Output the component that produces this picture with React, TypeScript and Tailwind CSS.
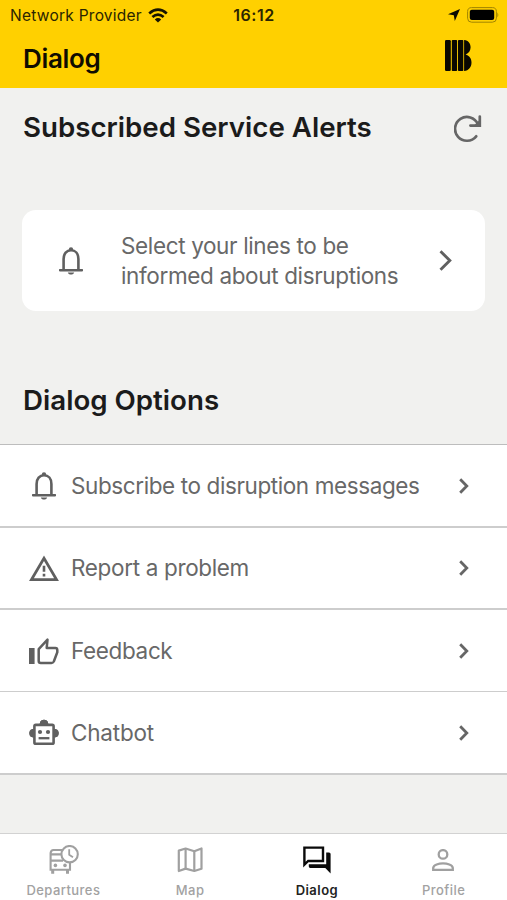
import type { ReactNode } from "react";

function BellIcon({ className = "" }: { className?: string }) {
  return (
    <svg className={className} width="24" height="28" viewBox="0 0 24 28" fill="none">
      <path d="M4.6 23V12C4.6 6.8 7.6 3.3 12 3.3S19.4 6.8 19.4 12V23" stroke="#606060" strokeWidth="2.6" />
      <path d="M1 23.2H23" stroke="#606060" strokeWidth="2.5" strokeLinecap="round" />
      <path d="M9.8 3.2V2.4a2.2 2.2 0 0 1 4.4 0v.8zM8.8 25.4h6.4c-.5 1.4-1.6 2.2-3.2 2.2s-2.7-.8-3.2-2.2z" fill="#606060" />
    </svg>
  );
}

function WarningIcon() {
  return (
    <svg width="30" height="27" viewBox="0 0 30 27" fill="none">
      <path d="M15 3.2L27.6 24.7H2.4z" stroke="#606060" strokeWidth="2.7" />
      <path d="M15 10.8v6M15 18.8v2.6" stroke="#606060" strokeWidth="2.6" />
    </svg>
  );
}

function ThumbIcon() {
  return (
    <svg width="30" height="28" viewBox="0 0 30 28" fill="none">
      <path d="M0 11h5.6v16H0z" fill="#606060" />
      <path
        d="M9.7 12.2L18.5 2.7L17.7 10.9H26.4Q28.3 10.9 28.3 13V15.2L24.8 24.5Q24 26 22.4 26H11.8Q9.7 26 9.7 24z"
        stroke="#606060"
        strokeWidth="2.5"
        strokeLinejoin="round"
      />
    </svg>
  );
}

function RobotIcon() {
  return (
    <svg width="30" height="27" viewBox="0 0 30 27" fill="none">
      <rect x="5.4" y="5.9" width="19.2" height="18.9" rx="1.4" stroke="#606060" strokeWidth="2.6" />
      <path d="M11 5a4 4 0 0 1 8 0zM4.5 10.2a4 4 0 0 0 0 8zM25.5 10.2a4 4 0 0 1 0 8z" fill="#606060" stroke="#606060" />
      <circle cx="11" cy="13" r="2.1" fill="#606060" />
      <circle cx="19" cy="13" r="2.1" fill="#606060" />
      <path d="M9.6 19.2h10.8" stroke="#606060" strokeWidth="2.3" />
    </svg>
  );
}

function RefreshIcon() {
  return (
    <svg width="28" height="28" viewBox="0 0 28 28" fill="none" stroke="#666" strokeWidth="2.7" strokeLinecap="round">
      <path d="M22.2 21.3A11.9 11.9 0 1 1 23.8 9" />
      <path d="M25.8 1.6V10.6H16.4" />
      <path d="M20 10.4L25.8 4.8V10.4z" fill="#666" stroke="none" />
    </svg>
  );
}

function Chevron({ large = false }: { large?: boolean }) {
  return large ? (
    <svg width="13" height="21" viewBox="0 0 13 21" fill="none">
      <path d="M1.5 1.3L10.8 10.5L1.5 19.7" stroke="#606060" strokeWidth="2.9" />
    </svg>
  ) : (
    <svg width="10" height="16" viewBox="0 0 10 16" fill="none">
      <path d="M1.2 1.2L7.8 8L1.2 14.8" stroke="#666" strokeWidth="2.8" />
    </svg>
  );
}

function BusIcon() {
  return (
    <svg className="ml-px" width="30" height="30" viewBox="0 0 30 30" fill="none" stroke="#a0a0a0" strokeWidth="2.1">
      <path d="M13.5 5H4.5Q2 5.2 1.6 8V24.8H21V17" />
      <path d="M1.6 9.4H12M1.6 15.6H14" />
      <path d="M3.7 25V28.8M18.5 25V28.8" strokeWidth="3" />
      <circle cx="6.4" cy="20.4" r="1.8" fill="#a0a0a0" stroke="none" />
      <circle cx="16" cy="20.4" r="1.8" fill="#a0a0a0" stroke="none" />
      <circle cx="20.6" cy="9.2" r="8.2" />
      <path d="M20.2 4.3V9.8L24 12.3" strokeWidth="1.8" />
    </svg>
  );
}

function MapIcon() {
  return (
    <svg width="26" height="26" viewBox="0 0 26 26" fill="none" stroke="#a0a0a0" strokeWidth="2.2" strokeLinejoin="round">
      <path d="M1.8 3.6L8.6 1.5L17.3 4.3L24.5 1.5V21.8L17.3 24L8.6 21.6L1.8 24z" />
      <path d="M8.6 1.5V21.6M17.3 4.3V24" />
    </svg>
  );
}

function ChatIcon() {
  return (
    <svg width="28" height="28" viewBox="0 0 28 28" fill="none">
      <path d="M1.4 1.6H20V15H5.2L1.4 18.6z" stroke="#0a0a0a" strokeWidth="2.4" />
      <path d="M23.2 6.4H26Q27.6 6.4 27.6 8V27.4L22.3 22H7.2Q5.8 22 5.8 20.6V18.2H23.2z" fill="#0a0a0a" />
    </svg>
  );
}

function ProfileIcon() {
  return (
    <svg className="mr-[2px]" width="22" height="22" viewBox="0 0 22 22" fill="none" stroke="#a0a0a0" strokeWidth="2.3">
      <circle cx="11" cy="5.4" r="4.3" />
      <path d="M1.2 20.8V18.8C1.6 15.9 6.8 14.4 11 14.4S20.4 15.9 20.8 18.8V20.8z" />
    </svg>
  );
}

function StatusBar() {
  return (
    <div className="grid h-[30px] grid-cols-3 items-center pl-[10px] pr-[8px] text-[#2b2500]">
      <div className="flex items-center gap-[6px] whitespace-nowrap">
        <span className="pt-px text-[15.5px] tracking-[0.25px]">Network Provider</span>
        <svg width="20" height="15" viewBox="0 0 20 15" fill="none" stroke="#171400" strokeWidth="2.7">
          <path d="M1.2 5.5Q10-2.1 18.8 5.5" />
          <path d="M4.4 9Q10 4.1 15.6 9" />
          <path d="M10 14.5L6.8 11.4Q10 8.7 13.2 11.4z" fill="#171400" stroke="none" />
        </svg>
      </div>
      <div className="pr-px text-center text-base font-semibold tracking-[0.55px]">16:12</div>
      <div className="flex items-center justify-end gap-[7px]">
        <svg width="12" height="12" viewBox="0 0 12 12">
          <path d="M12 0L6.8 12L5.8 6.2L0 5.2z" fill="#0c0a00" />
        </svg>
        <svg className="-mt-px" width="32" height="16" viewBox="0 0 32 16">
          <rect x=".6" y=".6" width="28.8" height="14.6" rx="4" fill="none" stroke="#a18400" strokeWidth="1" />
          <rect x="2.8" y="2.8" width="24.4" height="10.2" rx="2" fill="#000" />
          <path d="M30.4 5.5q1.8 2.4 0 4.8z" fill="#a18400" />
        </svg>
      </div>
    </div>
  );
}

function Logo() {
  return (
    <svg width="27" height="31" viewBox="0 0 27 31" fill="#0a0800">
      <rect x="0" y="0" width="5.8" height="31" rx="1.2" />
      <rect x="6.8" y="0" width="5.3" height="31" rx=".8" />
      <rect x="13" y="0" width="5.3" height="31" rx=".8" />
      <path d="M19.1 0C23.6.5 25.6 3.6 25.6 7.3C25.6 10.6 23.8 13.4 20.6 14.5C24.4 15.6 26.5 18.8 26.5 22.4C26.5 27 23.8 30.5 19.1 31z" />
    </svg>
  );
}

function OptionRow({ icon, label, tracking, border }: { icon: ReactNode; label: string; tracking: string; border: string }) {
  return (
    <button className={`flex w-full items-center border-[#cdcdcd] bg-white pl-[29px] pr-[38px] text-left ${border}`}>
      <span className="flex w-[30px] justify-center">{icon}</span>
      <span className={`ml-3 grow text-[22.5px] leading-7 whitespace-nowrap ${tracking}`}>{label}</span>
      <Chevron />
    </button>
  );
}

function Tab({ icon, label, active = false }: { icon: ReactNode; label: string; active?: boolean }) {
  return (
    <div className={`flex flex-col items-center ${active ? "font-semibold text-[#222]" : "font-medium text-[#a2a2a2]"}`}>
      <span className="flex h-[50px] items-center pt-[2px]">{icon}</span>
      <span className="text-[13px] leading-3 tracking-[0.45px]">{label}</span>
    </div>
  );
}

export default function App() {
  return (
    <div className="flex h-[900px] w-[507px] flex-col overflow-hidden bg-[#f1f1ef] font-['Inter','Liberation_Sans',sans-serif] text-[#686868]">
      <header className="h-[88px] shrink-0 bg-[#ffd000]">
        <StatusBar />
        <div className="flex h-[50px] items-center justify-between pl-[23px] pr-[35px]">
          <h1 className="pt-[6px] text-[26px] font-semibold tracking-[-0.35px] text-[#0f0c00]">Dialog</h1>
          <Logo />
        </div>
      </header>

      <main className="grow">
        <div className="flex h-[82px] items-center justify-between pl-[23px] pr-[25px]">
          <h2 className="-mt-[2px] text-[27.7px] font-semibold text-[#1b1b1b]">Subscribed Service Alerts</h2>
          <RefreshIcon />
        </div>
        <button className="mx-[22px] mt-[40px] flex h-[101px] w-[463px] items-center rounded-[14px] bg-white pl-[37px] pr-[33px] text-left">
          <BellIcon />
          <span className="ml-[38px] grow whitespace-nowrap text-[22.5px] leading-[30px] tracking-[-0.36px]">
            Select your lines to be
            <br />
            informed about disruptions
          </span>
          <Chevron large />
        </button>
        <h2 className="mt-[69px] pl-[23px] text-[27.7px] leading-10 font-semibold text-[#1b1b1b]">Dialog Options</h2>
        <div className="mt-[24px] border-t border-[#bdbdbd]">
          <OptionRow icon={<BellIcon />} label="Subscribe to disruption messages" tracking="tracking-[-0.4px]" border="h-[83px] border-b-2" />
          <OptionRow icon={<WarningIcon />} label="Report a problem" tracking="tracking-[-0.34px]" border="h-[82px] border-b-2" />
          <OptionRow icon={<ThumbIcon />} label="Feedback" tracking="tracking-[-0.36px]" border="h-[82px] border-b" />
          <OptionRow icon={<RobotIcon />} label="Chatbot" tracking="tracking-[-0.2px]" border="h-[83px] border-b-2" />
        </div>
      </main>

      <nav className="grid h-[67px] shrink-0 grid-cols-4 border-t border-[#d2d2d2] bg-white">
        <Tab icon={<BusIcon />} label="Departures" />
        <Tab icon={<MapIcon />} label="Map" />
        <Tab icon={<ChatIcon />} label="Dialog" active />
        <Tab icon={<ProfileIcon />} label="Profile" />
      </nav>
    </div>
  );
}
